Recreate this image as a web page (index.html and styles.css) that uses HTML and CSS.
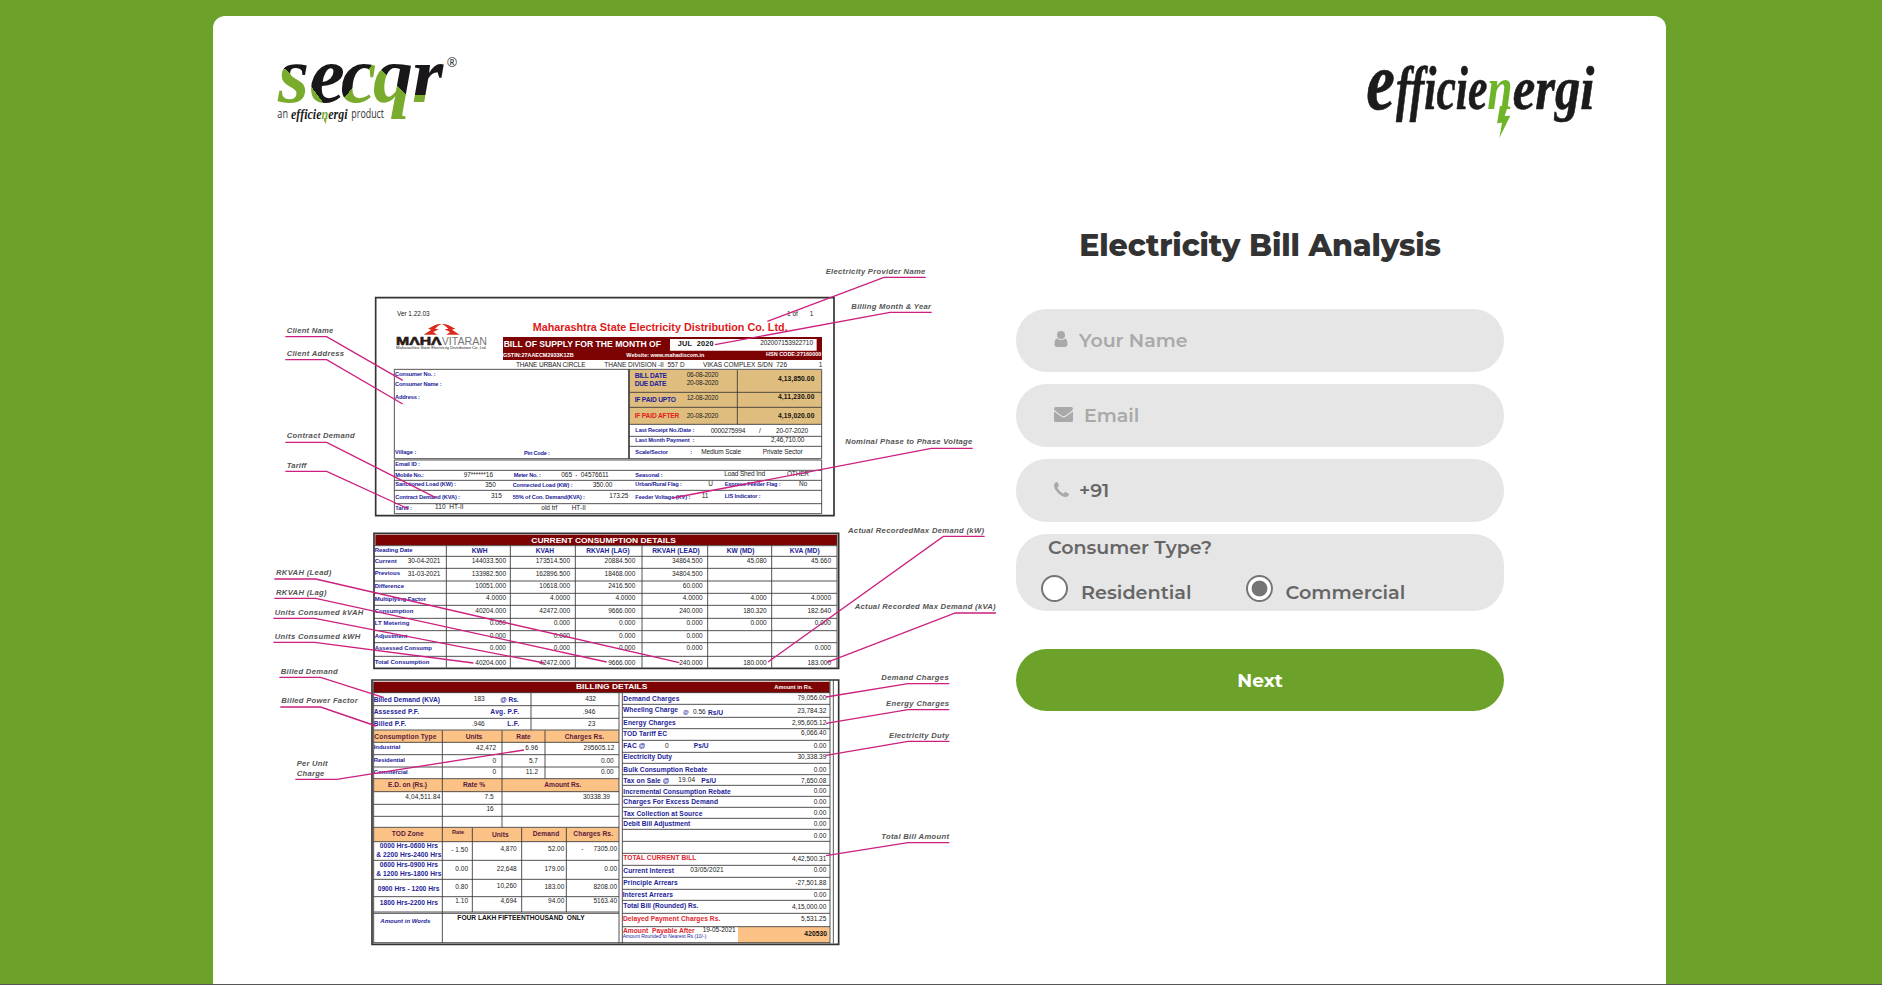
FILE: index.html
```html
<!DOCTYPE html>
<html lang="en">
<head>
<meta charset="utf-8">
<title>Electricity Bill Analysis</title>
<link rel="stylesheet" href="styles.css">
</head>
<body>
<main class="card">
  <header class="brands">
    <svg class="logo-secqr" viewBox="210 150 600 240" role="img" aria-label="secqr">
      <defs>
        <linearGradient id="gs" gradientUnits="userSpaceOnUse" x1="240" y1="300" x2="320" y2="200"><stop offset=".64" stop-color="#79ab2c"/><stop offset=".64" stop-color="#19171a"/></linearGradient>
        <linearGradient id="ge" gradientUnits="userSpaceOnUse" x1="330" y1="310" x2="396" y2="260"><stop offset=".4" stop-color="#79ab2c"/><stop offset=".4" stop-color="#19171a"/></linearGradient>
        <linearGradient id="gc" gradientUnits="userSpaceOnUse" x1="400" y1="230" x2="465" y2="285"><stop offset=".77" stop-color="#19171a"/><stop offset=".77" stop-color="#79ab2c"/></linearGradient>
        <linearGradient id="gq" gradientUnits="userSpaceOnUse" x1="548" y1="275" x2="612" y2="211"><stop offset=".48" stop-color="#79ab2c"/><stop offset=".48" stop-color="#19171a"/></linearGradient>
        <linearGradient id="gr" gradientUnits="userSpaceOnUse" x1="650" y1="200" x2="650" y2="308"><stop offset=".8" stop-color="#19171a"/><stop offset=".8" stop-color="#79ab2c"/></linearGradient>
      </defs>
      <text class="didone" y="307" font-size="240"><tspan x="234" fill="url(#gs)">s</tspan><tspan x="328" fill="url(#ge)">e</tspan><tspan x="422" fill="url(#gc)">c</tspan><tspan x="519" fill="url(#gq)">q</tspan><tspan x="636" fill="url(#gr)">r</tspan></text>
      <text class="thin" x="740" y="202" font-size="38">®</text>
      <text class="thin" x="232" y="354" font-size="36" textLength="32" lengthAdjust="spacingAndGlyphs">an</text>
      <text class="didone" x="273" y="356" font-size="42" textLength="170" lengthAdjust="spacingAndGlyphs">efficie<tspan fill="#79ab2c">n</tspan>ergi</text>
      <path d="M372 354 L381 356 L376 361 L380 362 L375 376 L376 365 L372 364Z" fill="#79ab2c"/>
      <text class="thin" x="454" y="354" font-size="36" textLength="98" lengthAdjust="spacingAndGlyphs">product</text>
    </svg>
    <svg class="logo-eff" viewBox="60 165 720 270" role="img" aria-label="efficienergi">
      <text class="didone heavy" x="79" y="326" font-size="250" textLength="86" lengthAdjust="spacingAndGlyphs">e</text>
      <text class="didone heavy" x="168" y="326" font-size="184" textLength="274" lengthAdjust="spacingAndGlyphs">fficie</text>
      <text class="didone" x="442" y="326" font-size="184" fill="#6fb52c" textLength="76" lengthAdjust="spacingAndGlyphs">n</text>
      <text class="didone heavy" x="518" y="326" font-size="184" textLength="245" lengthAdjust="spacingAndGlyphs">ergi</text>
      <path d="M480 318 L504 318 L494 348 L511 347 L478 414 L486 368 L471 370Z" fill="#6fb52c"/>
    </svg>
  </header>

  <div class="content">
    <svg class="bill" viewBox="0 0 2205 2100" role="img" aria-label="Annotated electricity bill">
      <!-- Bill header -->
      <g>
        <path class="frame" d="M317 113H1692V767H317Z"/>
        <text class="k" x="381" y="167" textLength="98">Ver 1.22.03</text>
        <path d="M461 224 L484 209 L474 206 L494 196 Q504 191 515 192 Q505 196 495 206 L506 208 L490 216 L501 224Z M569 224 L546 209 L556 206 L536 196 Q526 191 515 192 Q525 196 535 206 L524 208 L540 216 L529 224Z" fill="#da2a1c"/>
        <text class="maha" x="378" y="256" textLength="137" lengthAdjust="spacingAndGlyphs">MΛHΛ</text>
        <text class="vit" x="515" y="256" textLength="136" lengthAdjust="spacingAndGlyphs">VITARAN</text>
        <text class="k" x="378" y="266" font-size="11" textLength="272" lengthAdjust="spacingAndGlyphs">Maharashtra State Electricity Distribution Co. Ltd.</text>
        <text class="red" x="788" y="214" font-size="30" textLength="765" lengthAdjust="spacingAndGlyphs">Maharashtra State Electricity Distribution Co. Ltd.</text>
        <path class="maroon" d="M699 231H1656V300H699Z"/><path fill="#fff" d="M1200 237H1640V272H1200Z"/>
        <text class="w" x="701" y="261" font-size="25" textLength="472" lengthAdjust="spacingAndGlyphs">BILL OF SUPPLY FOR THE MONTH OF</text>
        <text class="w" x="699" y="291" font-size="15" textLength="212" lengthAdjust="spacingAndGlyphs">GSTIN:27AAECM2933K1ZB</text>
        <text class="w" x="1069" y="290" font-size="15" textLength="234" lengthAdjust="spacingAndGlyphs">Website: www.mahadiscom.in</text>
        <text class="w" x="1488" y="289" font-size="15" textLength="166" lengthAdjust="spacingAndGlyphs">HSN CODE:27160000</text>
        <text class="kb" x="1223" y="258" font-size="22" textLength="108" xml:space="preserve">JUL  2020</text>
        <text class="k" x="1471" y="255" textLength="158">202007153922710</text>
        <text class="k" x="738" y="321" textLength="209">THANE URBAN CIRCLE</text>
        <text class="k" x="1003" y="321" textLength="241" xml:space="preserve">THANE DIVISION -II  557 D</text>
        <text class="k" x="1299" y="321" textLength="252" xml:space="preserve">VIKAS COMPLEX S/DN  726</text>
        <text class="k" x="1646" y="321">1</text>
        <text class="k" x="1551" y="167">1 of</text><text class="k" x="1619" y="167">1</text>

        <path fill="#dfbd7e" d="M1078 330H1654V493H1078Z"/>
        <path class="ln" d="M373 328H1655V596H373Z M373 600H1655V761H373Z M373 631H1655 M373 661H1655 M373 691H1655 M373 731H1655 M1078 397H1655 M1078 442H1655 M1078 493H1655 M1078 529H1655 M1078 559H1655 M1402 330V493"/>
        <path class="ln thick" d="M1077 328V596"/>
        <g class="b" font-size="17">
          <text x="375" y="348" textLength="122">Consumer No. :</text><text x="375" y="379" textLength="140">Consumer Name :</text><text x="375" y="418" textLength="75">Address :</text>
          <text x="375" y="582" textLength="64">Village :</text><text x="762" y="584" textLength="78">Pin Code :</text><text x="376" y="619" textLength="74">Email ID :</text>
          <text x="376" y="650" textLength="86">Mobile No.:</text><text x="731" y="650" textLength="82">Meter No. :</text><text x="376" y="679" textLength="182">Sanctioned Load (KW) :</text>
          <text x="728" y="681" textLength="180">Connected Load (KW) :</text><text x="376" y="717" textLength="194">Contract Demand (KVA) :</text><text x="728" y="717" textLength="217">55% of Con. Demand(KVA) :</text><text x="376" y="749" textLength="50">Tariff :</text>
          <text x="1096" y="515" textLength="177">Last Receipt No./Date :</text><text x="1096" y="546" textLength="177" xml:space="preserve">Last Month Payment  :</text><text x="1096" y="582" textLength="98">Scale/Sector</text><text x="1261" y="582">:</text>
          <text x="1096" y="651" textLength="82">Seasonal :</text><text x="1096" y="679" textLength="140">Urban/Rural Flag :</text><text x="1364" y="679" textLength="168">Express Feeder Flag :</text><text x="1096" y="717" textLength="165">Feeder Voltage (KV) :</text><text x="1364" y="714" textLength="108">LIS Indicator :</text>
        </g>
        <g class="b" font-size="20"><text x="1094" y="354" textLength="97">BILL DATE</text><text x="1094" y="377" textLength="95">DUE DATE</text><text x="1094" y="425" textLength="124">IF PAID UPTO</text><text x="1094" y="474" fill="#e3221b" textLength="134">IF PAID AFTER</text></g>
        <g class="k"><text x="1250" y="350" textLength="95">06-08-2020</text><text x="1250" y="375" textLength="95">20-08-2020</text><text x="1250" y="419" textLength="95">12-08-2020</text><text x="1250" y="475" textLength="95">20-08-2020</text>
          <text x="1322" y="518" textLength="104">0000275994</text><text x="1467" y="518">/</text><text x="1518" y="518" textLength="96">20-07-2020</text><text x="1503" y="547" textLength="100">2,46,710.00</text><text x="1294" y="583" textLength="119">Medium Scale</text><text x="1478" y="583" textLength="120">Private Sector</text>
          <text x="1363" y="647" textLength="122">Load Shed Ind</text><text x="1551" y="647" textLength="66">OTHER</text><text x="1315" y="679">U</text><text x="1587" y="679">No</text><text x="1295" y="714">11</text>
          <text x="581" y="650" textLength="88">97******16</text><text x="645" y="680">350</text><text x="663" y="713">315</text><text x="495" y="748" textLength="86" xml:space="preserve">110  HT-II</text><text x="874" y="650" textLength="142" xml:space="preserve">065  -  04576611</text><text x="968" y="682" textLength="59">350.00</text><text x="1018" y="713" textLength="57">173.25</text><text x="814" y="751" textLength="48">old trf</text><text x="905" y="749">HT-II</text>
        </g>
        <g class="kb" font-size="20"><text x="1524" y="362" textLength="109">4,13,850.00</text><text x="1524" y="418" textLength="109">4,11,230.00</text><text x="1524" y="473" textLength="109">4,19,020.00</text></g>
      </g>

      <!-- Current consumption -->
      <g transform="translate(0 780)">
        <path class="frame" d="M312 40H1706V445H312Z"/><path class="maroon" d="M316 44H1701V76H316Z"/>
        <text class="w" x="784" y="68" font-size="24" textLength="434" lengthAdjust="spacingAndGlyphs">CURRENT CONSUMPTION DETAILS</text>
        <path class="ln" d="M312 77H1701 M312 109H1701 M312 145H1701 M312 183H1701 M312 220H1701 M312 256H1701 M312 295H1701 M312 332H1701 M312 368H1701 M312 409H1701 M529 77V443 M721 77V443 M916 77V443 M1116 77V443 M1313 77V443 M1505 77V443 M1701 44V443"/>
        <g class="b" font-size="18"><text x="314" y="97" textLength="114">Reading Date</text><text x="314" y="130" textLength="66">Current</text><text x="314" y="166" textLength="76">Previous</text><text x="314" y="203" textLength="88">Difference</text><text x="314" y="243" textLength="154">Multiplying Factor</text><text x="314" y="280" textLength="116">Consumption</text><text x="314" y="316" textLength="104">LT Metering</text><text x="314" y="353" textLength="98">Adjustment</text><text x="314" y="391" textLength="172">Assessed Consump</text><text x="314" y="432" textLength="164">Total Consumption</text></g>
        <g class="b m" font-size="20"><text x="629" y="100">KWH</text><text x="825" y="100">KVAH</text><text x="1014" y="100">RKVAH (LAG)</text><text x="1218" y="100">RKVAH (LEAD)</text><text x="1412" y="100">KW (MD)</text><text x="1604" y="100">KVA (MD)</text></g>
        <g class="k"><text x="413" y="130" textLength="98">30-04-2021</text><text x="413" y="167" textLength="98">31-03-2021</text></g>
        <g class="k r">
          <text x="708" y="130">144033.500</text><text x="708" y="167">133982.500</text><text x="708" y="203">10051.000</text><text x="708" y="241">4.0000</text><text x="708" y="279">40204.000</text><text x="708" y="315">0.000</text><text x="708" y="353">0.000</text><text x="708" y="391">0.000</text><text x="708" y="434">40204.000</text>
          <text x="900" y="130">173514.500</text><text x="900" y="167">162896.500</text><text x="900" y="203">10618.000</text><text x="900" y="241">4.0000</text><text x="900" y="279">42472.000</text><text x="900" y="315">0.000</text><text x="900" y="353">0.000</text><text x="900" y="391">0.000</text><text x="900" y="434">42472.000</text>
          <text x="1096" y="130">20884.500</text><text x="1096" y="167">18468.000</text><text x="1096" y="203">2416.500</text><text x="1096" y="241">4.0000</text><text x="1096" y="279">9666.000</text><text x="1096" y="315">0.000</text><text x="1096" y="353">0.000</text><text x="1096" y="391">0.000</text><text x="1096" y="434">9666.000</text>
          <text x="1298" y="130">34864.500</text><text x="1298" y="167">34804.500</text><text x="1298" y="203">60.000</text><text x="1298" y="241">4.0000</text><text x="1298" y="279">240.000</text><text x="1298" y="315">0.000</text><text x="1298" y="353">0.000</text><text x="1298" y="391">0.000</text><text x="1298" y="434">240.000</text>
          <text x="1490" y="130">45.080</text><text x="1490" y="241">4.000</text><text x="1490" y="279">180.320</text><text x="1490" y="315">0.000</text><text x="1490" y="434">180.000</text>
          <text x="1683" y="130">45.660</text><text x="1683" y="241">4.0000</text><text x="1683" y="279">182.640</text><text x="1683" y="315">0.000</text><text x="1683" y="391">0.000</text><text x="1683" y="434">183.000</text>
        </g>
      </g>

      <!-- Billing details -->
      <g transform="translate(0 1230)">
        <path class="frame" d="M306 30H1706V823H306Z"/><path class="maroon" d="M311 35H1679V68H311Z"/>
        <text class="w" x="918" y="58" font-size="24" textLength="214" lengthAdjust="spacingAndGlyphs">BILLING DETAILS</text>
        <text class="w" x="1513" y="58" font-size="17" textLength="115" lengthAdjust="spacingAndGlyphs">Amount in Rs.</text>
        <path fill="#fcc184" d="M311 181H1047V217H311Z M311 327H1047V365H311Z M311 473H1047V515H311Z"/>
        <path fill="#fcc184" d="M1404 771H1679V818H1404Z"/>
        <path class="ln" d="M311 35V820 M1047 68V820 M1057 68V820 M1680 30V820 M1690 30V820 M311 68H1680 M311 107H1047 M311 145H1047 M311 180H1047 M311 217H1047 M311 254H1047 M311 291H1047 M311 326H1047 M311 365H1047 M311 403H1047 M311 439H1047 M311 472H1047 M311 515H1047 M311 571H1047 M311 628H1047 M311 680H1047 M311 726H1047 M311 730H1047 M311 818H1680 M783 68V180 M517 181V818 M696 181V472 M825 181V326 M607 473V726 M755 473V726 M889 473V726"/>
        <path class="ln" d="M1057 103H1680 M1057 142H1680 M1057 176H1680 M1057 211H1680 M1057 247H1680 M1057 280H1680 M1057 314H1680 M1057 346H1680 M1057 379H1680 M1057 412H1680 M1057 445H1680 M1057 478H1680 M1057 514H1680 M1057 550H1680 M1057 586H1680 M1057 622H1680 M1057 658H1680 M1057 691H1680 M1057 730H1680 M1057 770H1680"/>
        <g class="b"><text x="311" y="95" textLength="199">Billed Demand (KVA)</text><text x="311" y="131" textLength="136">Assessed P.F.</text><text x="311" y="167" textLength="97">Billed P.F.</text><text x="691" y="96" textLength="55">@ Rs.</text><text x="661" y="131" textLength="86">Avg. P.F.</text><text x="712" y="167" textLength="36">L.F.</text>
          <text x="311" y="238" font-size="18" textLength="80">Industrial</text><text x="311" y="277" font-size="18" textLength="94">Residential</text><text x="311" y="311" font-size="18" textLength="102">Commercial</text>
          <text x="329" y="534" textLength="175">0000 Hrs-0600 Hrs</text><text x="319" y="560" textLength="195">&amp; 2200 Hrs-2400 Hrs</text><text x="329" y="592" textLength="175">0600 Hrs-0900 Hrs</text><text x="319" y="617" textLength="195">&amp; 1200 Hrs-1800 Hrs</text><text x="323" y="662" textLength="185">0900 Hrs - 1200 Hrs</text><text x="329" y="705" textLength="175">1800 Hrs-2200 Hrs</text><text x="331" y="759" font-size="18" font-style="italic" textLength="150">Amount in Words</text></g>
        <g class="hd"><text x="313" y="206" textLength="186">Consumption Type</text><text x="587" y="208">Units</text><text x="739" y="208">Rate</text><text x="884" y="208" textLength="118">Charges Rs.</text><text x="354" y="351" textLength="117">E.D. on (Rs.)</text><text x="579" y="351">Rate %</text><text x="823" y="351" textLength="111">Amount Rs.</text><text x="365" y="499" textLength="96">TOD Zone</text><text x="546" y="491" font-size="17">Rate</text><text x="666" y="500">Units</text><text x="788" y="499" textLength="80">Demand</text><text x="910" y="499" textLength="119">Charges Rs.</text></g>
        <g class="k r"><text x="644" y="93">183</text><text x="978" y="93">432</text><text x="976" y="131">.946</text><text x="644" y="167">.946</text><text x="976" y="167">23</text><text x="678" y="240">42,472</text><text x="804" y="240">6.96</text><text x="1033" y="240">295605.12</text><text x="678" y="278">0</text><text x="804" y="278">5.7</text><text x="1031" y="278">0.00</text><text x="678" y="313">0</text><text x="804" y="313">11.2</text><text x="1031" y="313">0.00</text><text x="511" y="386" textLength="105">4,04,511.84</text><text x="671" y="386">7.5</text><text x="1020" y="388">30338.39</text><text x="671" y="423">16</text>
          <text x="594" y="546">- 1.50</text><text x="740" y="544">4,870</text><text x="883" y="544">52.00</text><text x="940" y="544">-</text><text x="1041" y="544">7305.00</text><text x="594" y="603">0.00</text><text x="740" y="602">22,648</text><text x="883" y="602">179.00</text><text x="1041" y="602">0.00</text><text x="594" y="656">0.80</text><text x="740" y="655">10,260</text><text x="883" y="656">183.00</text><text x="1041" y="656">8208.00</text><text x="594" y="700">1.10</text><text x="740" y="700">4,694</text><text x="883" y="700">94.00</text><text x="1041" y="700">5163.40</text></g>
        <text class="kb" x="562" y="751" font-size="20" textLength="382" xml:space="preserve">FOUR LAKH FIFTEENTHOUSAND  ONLY</text>
        <g class="b"><text x="1060" y="93" textLength="168">Demand Charges</text><text x="1059" y="125" textLength="165">Wheeling Charge</text><text x="1239" y="133" font-size="18">@</text><text x="1314" y="134" textLength="45">Rs/U</text><text x="1060" y="165" textLength="157">Energy Charges</text><text x="1059" y="197" textLength="132">TOD Tariff EC</text><text x="1060" y="234" textLength="66">FAC @</text><text x="1271" y="234" textLength="45">Ps/U</text><text x="1060" y="268" textLength="146">Electricity Duty</text><text x="1060" y="305" textLength="252">Bulk Consumption Rebate</text><text x="1060" y="338" textLength="138">Tax on Sale @</text><text x="1294" y="338" textLength="44">Ps/U</text><text x="1060" y="371" textLength="322">Incremental Consumption Rebate</text><text x="1060" y="403" textLength="284">Charges For Excess Demand</text><text x="1060" y="437" textLength="237">Tax Collection at Source</text><text x="1060" y="468" textLength="201">Debit Bill Adjustment</text><text x="1060" y="608" textLength="152">Current Interest</text><text x="1060" y="644" textLength="163">Principle Arrears</text><text x="1058" y="681" textLength="151">Interest Arrears</text><text x="1060" y="715" textLength="225">Total Bill (Rounded) Rs.</text></g>
        <g class="rb"><text x="1060" y="571" textLength="219">TOTAL CURRENT BILL</text><text x="1059" y="753" textLength="292">Delayed Payment Charges Rs.</text><text x="1059" y="789" textLength="215" xml:space="preserve">Amount  Payable After</text></g>
        <text x="1058" y="804" font-size="15" fill="#22229a" textLength="251" lengthAdjust="spacingAndGlyphs">Amount Rounded to Nearest Rs.(10/-)</text>
        <g class="k"><text x="1269" y="133">0.56</text><text x="1185" y="233">0</text><text x="1225" y="336" textLength="50">19.04</text><text x="1261" y="607" textLength="100">03/05/2021</text><text x="1298" y="787" textLength="99">19-05-2021</text></g>
        <g class="k r"><text x="1669" y="91">79,056.00</text><text x="1669" y="128">23,784.32</text><text x="1669" y="164">2,95,605.12</text><text x="1669" y="196">6,066.40</text><text x="1669" y="233">0.00</text><text x="1669" y="267">30,338.39</text><text x="1669" y="305">0.00</text><text x="1669" y="338">7,650.08</text><text x="1669" y="369">0.00</text><text x="1669" y="402">0.00</text><text x="1669" y="436">0.00</text><text x="1669" y="468">0.00</text><text x="1669" y="503">0.00</text><text x="1669" y="573">4,42,500.31</text><text x="1669" y="607">0.00</text><text x="1669" y="645">-27,501.88</text><text x="1669" y="681">0.00</text><text x="1669" y="716">4,15,000.00</text><text x="1669" y="754">5,531.25</text></g>
        <text class="kb" x="1603" y="799" font-size="20" textLength="68">420530</text>
      </g>

      <!-- Callout leader lines -->
      <g class="lead">
        <path d="M46 230H170L398 361 M46 299H170L398 432 M46 547H170L497 713 M46 634H170L416 747"/>
        <path d="M1967 52H1842L1492 184 M1985 157H1860L1335 254 M2108 565H1984L1208 714"/>
        <path transform="translate(0 780)" d="M13 177H137L1228 428 M13 235H137L1010 426 M10 295H134L823 429 M10 367H134L610 429 M2144 49H2020L1494 426 M2178 279H2056L1671 427"/>
        <path transform="translate(0 1230)" d="M28 22H152L340 82 M31 111H152L318 168 M76 328H200L762 240 M2038 41H1914L1668 81 M2038 119H1914L1668 160 M2038 214H1914L1668 256 M2038 518H1914L1668 557"/>
      </g>
      <g class="note">
        <text x="50" y="218" textLength="140">Client Name</text><text x="50" y="288" textLength="172">Client Address</text><text x="50" y="535" textLength="204">Contract Demand</text><text x="50" y="623" textLength="59">Tariff</text>
        <text x="1667" y="41" textLength="299">Electricity Provider Name</text><text x="1744" y="147" textLength="239">Billing Month &amp; Year</text><text x="1726" y="553" textLength="381">Nominal Phase to Phase Voltage</text>
        <text x="18" y="945" textLength="166">RKVAH (Lead)</text><text x="18" y="1004" textLength="152">RKVAH (Lag)</text><text x="14" y="1065" textLength="266">Units Consumed kVAH</text><text x="14" y="1137" textLength="257">Units Consumed kWH</text><text x="32" y="1242" textLength="171">Billed Demand</text>
        <text x="1734" y="818" textLength="408">Actual RecordedMax Demand (kW)</text><text x="1754" y="1047" textLength="423">Actual Recorded Max Demand (kVA)</text>
        <text x="34" y="1330" textLength="229">Billed Power Factor</text><text x="80" y="1519" textLength="93">Per Unit</text><text x="80" y="1548" textLength="83">Charge</text>
        <text x="1834" y="1259" textLength="202">Demand Charges</text><text x="1848" y="1339" textLength="189">Energy Charges</text><text x="1857" y="1434" textLength="180">Electricity Duty</text><text x="1834" y="1736" textLength="203">Total Bill Amount</text>
      </g>
    </svg>

    <form class="form">
      <h1 class="title">Electricity Bill Analysis</h1>
      <label class="field">
        <svg class="ic-user" viewBox="0 0 13 16"><circle cx="6.5" cy="4" r="4"/><path d="M2.6 7.5Q0 8.2 0 13.3Q0 16 2.6 16H10.4Q13 16 13 13.3Q13 8.2 10.4 7.5Q8.8 9 6.5 9T2.6 7.5Z"/></svg>
        <span>Your Name</span>
      </label>
      <label class="field">
        <svg class="ic-mail" viewBox="0 0 19 15"><path d="M0 1.6Q0 0 1.6 0H17.4Q19 0 19 1.6Q19 3 17 4.5L11.5 8.5Q9.5 10 7.5 8.5L2 4.5Q0 3 0 1.6Z M0 4.6L7 9.6Q9.5 11.2 12 9.6L19 4.6V13.5Q19 15 17.5 15H1.5Q0 15 0 13.5Z"/></svg>
        <span>Email</span>
      </label>
      <label class="field filled">
        <svg class="ic-phone" viewBox="0 0 15 15"><path d="M0 3.2Q.2 1.2 2 .3Q3.2-.3 3.6.4L4.9 3.3Q5.1 4 4.3 4.6Q3.3 5.3 3.5 5.9Q5.500 9.800 9 11.500Q9.600 11.700 10.400 10.600Q11 9.900 11.600 10.100L14.600 11.600Q15.200 12 14.700 13.200Q13.800 14.800 11.800 15Q8 15 4.100 11.100Q0 7 0 3.200Z"/></svg>
        <span>+91</span>
      </label>
      <div class="types">
        <p class="question">Consumer Type?</p>
        <div class="options">
          <label class="opt"><i class="dot"></i><span>Residential</span></label>
          <label class="opt"><i class="dot on"></i><span>Commercial</span></label>
        </div>
      </div>
      <button class="next" type="button">Next</button>
    </form>
  </div>
</main>
<footer class="edge"></footer>
</body>
</html>
```
FILE: styles.css
```css
* { box-sizing: border-box; }
html, body { height: 100%; }
body {
  margin: 0;
  overflow: hidden;
  background: #6ca229;
  display: flex;
  flex-direction: column;
  font-family: Montserrat, Inter, "Open Sans", sans-serif;
}
.card {
  flex: 1;
  min-height: 0;
  overflow: hidden;
  width: 1453px;
  margin: 16px 0 0 213px;
  background: #fff;
  border-radius: 12px 12px 0 0;
}
.edge { flex: none; height: 1px; background: #555; }
.brands {
  display: flex;
  justify-content: space-between;
  align-items: flex-start;
  height: 144px;
  padding: 34px 66px 0 57px;
}
.brands svg { overflow: visible; }
.logo-secqr { width: 200px; height: 80px; }
.logo-eff { width: 240px; height: 90px; margin-top: 5px; }
.didone { font-family: "Liberation Serif", serif; font-style: italic; font-weight: 700; fill: #1c1b1c; font-variant-ligatures: none; }
.didone[fill] { fill: #6fb52c; }
.heavy { stroke: #1c1b1c; stroke-width: 2; }
.thin { font-family: "Open Sans", sans-serif; fill: #333; }
.content { display: flex; align-items: flex-start; padding-left: 57px; }

/* Annotated bill */
.bill { flex: none; width: 735px; height: 700px; margin-top: 100px; font-family: "Liberation Sans", Arial, sans-serif; }
.frame { fill: #fff; stroke: #333; stroke-width: 5; }
.ln { fill: none; stroke: #3a3838; stroke-width: 2.6; }
.thick { stroke-width: 5; }
.maroon { fill: #7d0204; }
.k { fill: #222; font-size: 19.5px; }
.k[font-size="11"] { font-size: 11px; }
.kb { fill: #111; font-weight: 700; }
.w { fill: #fff; font-weight: 700; }
.red { fill: #de1a1a; font-weight: 700; }
.b { fill: #22229a; font-weight: 700; font-size: 20px; }
.b[font-size="17"] { font-size: 17px; }
.b[font-size="18"] { font-size: 18px; }
.hd { fill: #5b1a3c; font-weight: 700; font-size: 20px; }
.rb { fill: #e0242a; font-weight: 700; font-size: 20px; }
.r { text-anchor: end; }
.m { text-anchor: middle; }
.maha { font-weight: 700; font-size: 30px; fill: #2a1a16; stroke: #2a1a16; stroke-width: 1.5; }
.vit { font-size: 30px; fill: #777; }
.lead { fill: none; stroke: #cc1f7f; stroke-width: 4; }
.note { fill: #555; font-weight: 700; font-style: italic; font-size: 23px; }

/* Form */
.form { flex: none; width: 488px; margin-left: 11px; padding-top: 64px; }
.title { margin: 0 0 42px; height: 43px; line-height: 43px; text-align: center; font-size: 30px; font-weight: 800; color: #333; white-space: nowrap; letter-spacing: -.1px; }
.field {
  display: flex;
  align-items: center;
  height: 63px;
  margin-bottom: 12px;
  padding-left: 38px;
  border-radius: 31px;
  background: #e6e6e6;
  color: #a9a9a9;
  font-size: 19px;
  font-weight: 600;
}
.field svg { fill: #a9a9a9; flex: none; }
.field.filled { color: #666; }
.ic-user { width: 14px; height: 16px; margin: 0 11px 3px 0; }
.ic-mail { width: 19px; height: 15px; margin: 0 11px 2px 0; }
.ic-phone { width: 15px; height: 15px; margin: 0 10px 3px 0; }
.types { height: 77px; border-radius: 31px; background: #e6e6e6; color: #666; font-size: 19.2px; font-weight: 600; }
.question { margin: 0; padding: 3px 0 0 32px; line-height: 22px; font-size: 19px; }
.options { display: grid; grid-template-columns: 204.5px 1fr; padding: 16px 0 0 25px; }
.opt { display: flex; }
.opt span { margin: 5px 0 0 13px; line-height: 24px; }
.dot { width: 27px; height: 27px; border: 2px solid #757575; border-radius: 50%; background: #fff; }
.dot.on { background: radial-gradient(circle, #757575 7.5px, #fff 8.3px); }
.next { display: block; width: 488px; height: 62px; margin-top: 38px; border: 0; border-radius: 31px; background: #6ca229; color: #fff; font: 700 18.5px Montserrat, Inter, sans-serif; }
```
